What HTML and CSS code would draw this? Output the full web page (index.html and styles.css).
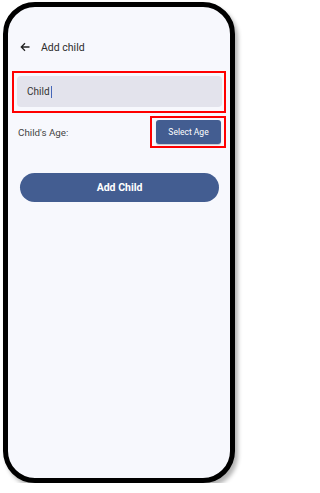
FILE: index.html
```html
<!DOCTYPE html>
<html>
<head>
<meta charset="utf-8">
<link rel="stylesheet" href="styles.css">
</head>
<body>
<div class="phone">
  <div class="screen">
    <div class="header">
      <svg class="back" width="10" height="10" viewBox="0 0 10 10"><path d="M9.5 5H1.5M5 1.3L1.3 5L5 8.7" fill="none" stroke="#222" stroke-width="1.3"/></svg>
      <span class="title">Add child</span>
    </div>
    <div class="hl hl-input">
      <div class="input"><span class="value">Child</span><span class="caret"></span></div>
    </div>
    <div class="age-row">
      <span class="age-label">Child's Age:</span>
      <div class="hl hl-btn">
        <button class="select-btn">Select Age</button>
      </div>
    </div>
    <button class="add-btn">Add Child</button>
  </div>
</div>
</body>
</html>
```
FILE: styles.css
```css
html, body { margin: 0; padding: 0; background: #fff; }
body { font-family: Roboto, "Liberation Sans", sans-serif; }
.phone {
  margin: 2px 0 0 3px;
  width: 232px;
  height: 481px;
  box-sizing: border-box;
  border: 5px solid #000;
  border-radius: 32px;
  background: #f7f8fd;
  box-shadow: 3px 4px 4px rgba(0,0,0,0.3);
  overflow: hidden;
}
.screen { padding: 28px 4px 0 4px; display: flex; flex-direction: column; }
.header { height: 24px; display: flex; align-items: center; padding-left: 8px; }
.back { margin-right: 11px; }
.title { font-size: 10.5px; color: #2c2c2c; }
.hl { border: 2px solid #f00; }
.hl-input { margin-top: 12px; padding: 3px 2px 4px 3px; }
.input {
  height: 31px; background: #e3e3ec; border-radius: 4px;
  display: flex; align-items: center; padding-left: 10px;
}
.value { font-size: 10px; color: #333; }
.caret { width: 1.5px; height: 12px; background: #4566b8; margin-left: 1px; }
.age-row { margin-top: 3px; display: flex; align-items: center; justify-content: space-between; padding-left: 6px; }
.age-label { font-size: 9.8px; color: #444; }
.hl-btn { padding: 2px 3px 2px 4px; }
.select-btn {
  width: 65px; height: 24px; border: none; border-radius: 3px;
  background: #435d91; color: #fff; font-family: inherit; font-size: 8.5px;
  box-shadow: 0 1px 1px rgba(0,0,0,0.2);
}
.add-btn {
  margin: 25px 0 0 8px; width: 199px; height: 29px; border: none; border-radius: 15px;
  background: #435d91; color: #fff; font-family: inherit; font-size: 10.5px; font-weight: bold;
}
```
